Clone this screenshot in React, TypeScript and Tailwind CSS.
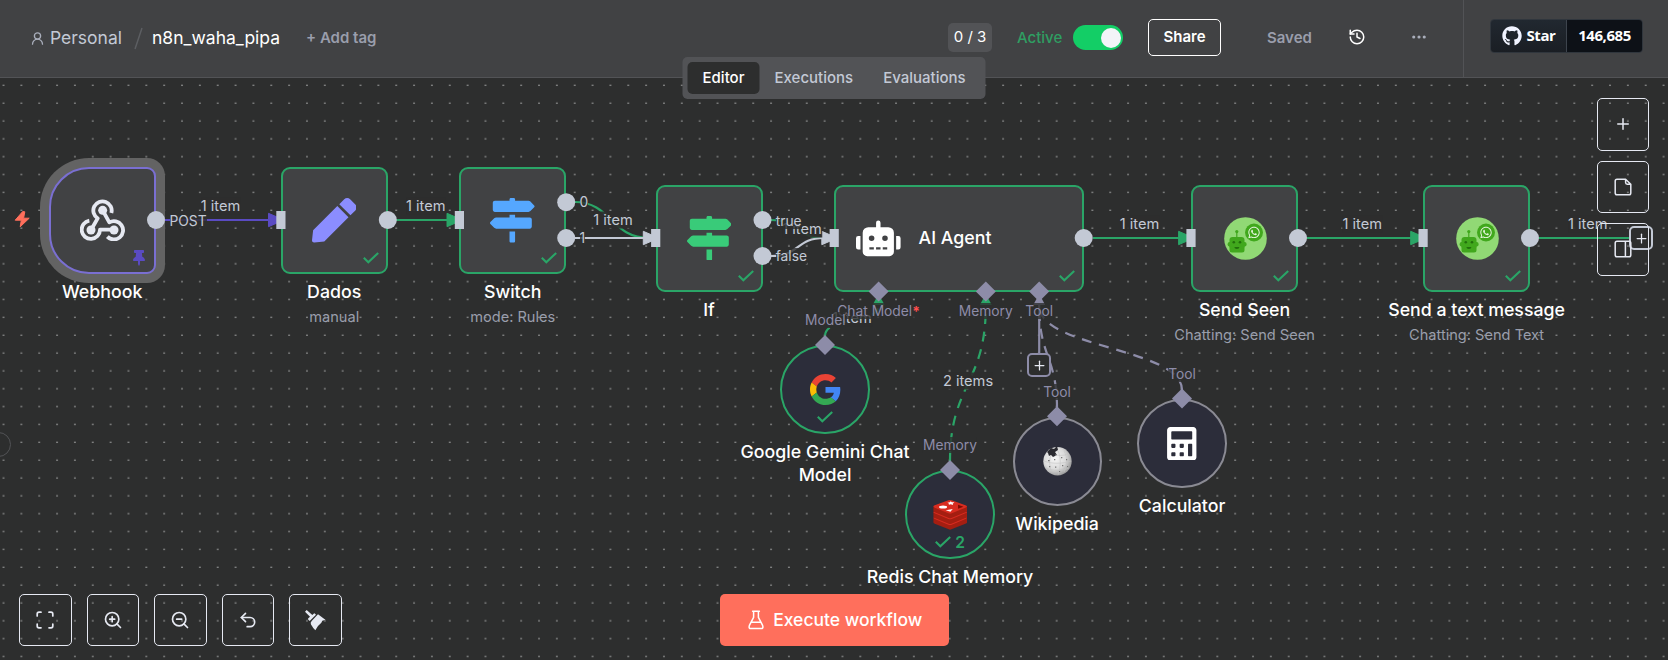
import type { ReactNode } from "react";
import { Ellipsis, History, Plus, Undo2, UserRound, ZoomIn, ZoomOut } from "lucide-react";
import { FaCalculator, FaGithub, FaMapSigns, FaPen, FaRobot, FaThumbtack, FaWhatsapp } from "react-icons/fa";

const UNIT = 17.85;
const ORIGIN_X = 48.6;
const ORIGIN_Y = 166.7;
const gx = (n: number) => ORIGIN_X + n * UNIT;
const gy = (n: number) => ORIGIN_Y + n * UNIT;

/* ---------- icons ---------- */

function CheckMark() {
  return (
    <svg width="16" height="12" viewBox="0 0 16 12" fill="none" stroke="#2aa567" strokeWidth="2.1">
      <path d="M0.8 5.8 5.3 10.2 15.2 0.9" />
    </svg>
  );
}

function WebhookIcon() {
  return (
    <svg width="45" height="42" viewBox="240 176 135 126" fill="none" stroke="#e6e9f2" strokeWidth="11.5" strokeLinejoin="round">
      <path d="M273 269 293 234A27.5 27.5 0 1 1 334 218" />
      <path d="M308 210 328 246A27.5 27.5 0 1 1 322 289" />
      <path d="M342 268 300 268A27.5 27.5 0 1 1 268 241" />
      <g fill="#e6e9f2" stroke="none">
        <circle cx="308" cy="210" r="13.5" />
        <circle cx="273" cy="269" r="13.5" />
        <circle cx="342" cy="269" r="13.5" />
      </g>
    </svg>
  );
}

function GoogleIcon() {
  return (
    <svg width="31" height="31" viewBox="0 0 48 48">
      <path fill="#EA4335" d="M24 9.5c3.54 0 6.71 1.22 9.21 3.6l6.85-6.85C35.9 2.38 30.47 0 24 0 14.62 0 6.51 5.38 2.56 13.22l7.98 6.19C12.43 13.72 17.74 9.5 24 9.5z" />
      <path fill="#4285F4" d="M46.98 24.55c0-1.57-.15-3.09-.38-4.55H24v9.02h12.94c-.58 2.96-2.26 5.48-4.78 7.18l7.73 6c4.51-4.18 7.09-10.36 7.09-17.65z" />
      <path fill="#FBBC05" d="M10.53 28.59c-.48-1.45-.76-2.99-.76-4.59s.27-3.14.76-4.59l-7.98-6.19C.92 16.46 0 20.12 0 24c0 3.88.92 7.54 2.56 10.78l7.97-6.19z" />
      <path fill="#34A853" d="M24 48c6.48 0 11.93-2.13 15.89-5.81l-7.73-6c-2.15 1.45-4.92 2.3-8.16 2.3-6.26 0-11.57-4.22-13.47-9.91l-7.98 6.19C6.51 42.62 14.62 48 24 48z" />
    </svg>
  );
}

function WahaIcon() {
  return (
    <svg width="43" height="43" viewBox="0 0 43 43" className="ml-px">
      <circle cx="21.5" cy="21.5" r="21.3" fill="#91d975" />
      <g fill="#41a81d">
        <circle cx="30" cy="15.5" r="9" />
        <circle cx="12.8" cy="14.6" r="1.6" />
        <rect x="12.2" y="15" width="1.2" height="6" />
        <rect x="5.5" y="27" width="15" height="8.5" rx="2.5" />
        <rect x="5.5" y="20" width="15" height="12" rx="3" />
        <rect x="3.6" y="25" width="19" height="4.5" rx="2" />
      </g>
      <g fill="#22700c">
        <circle cx="9.8" cy="25.2" r="1.3" />
        <circle cx="16" cy="25.2" r="1.3" />
        <path d="M10.4 30h5a2.5 2 0 0 1-5 0z" />
      </g>
      <FaWhatsapp x="23.5" y="9" size={13} color="#e9f7e2" />
    </svg>
  );
}

function RedisIcon() {
  return (
    <svg width="34.5" height="30" viewBox="0 0 103 90">
      {[34, 17, 0].map((y) => (
        <g key={y} transform={`translate(0 ${y})`}>
          <path d="M1 19v14c0 2 1 3 4 4l42 17q4 2 8 0l42-17c3-1 5-2 5-4V19z" fill="#a41e11" />
          <path d="M5 16 46 1q5-2 10 0l41 15c6 2 6 5 0 7L56 40q-5 2-10 0L5 23c-5-2-5-5 0-7z" fill="#d82c20" />
        </g>
      ))}
      <g fill="#fff">
        <ellipse cx="30" cy="21" rx="12" ry="4.6" />
        <path d="m43 8 7-1 3-3 3 3 8 0-5 4 1 4-7-2-6 1 1-3z" />
        <path d="m38 31 21-4-7 8z" />
      </g>
      <path d="m75 14 16 6-16 6z" fill="#7a0c00" />
    </svg>
  );
}

function WikipediaIcon() {
  return (
    <svg width="29" height="30" viewBox="0 0 29 30">
      <defs>
        <radialGradient id="globe" cx="0.4" cy="0.4" r="0.65">
          <stop offset="0" stopColor="#f6f6f6" />
          <stop offset="0.6" stopColor="#dadada" />
          <stop offset="1" stopColor="#969696" />
        </radialGradient>
      </defs>
      <circle cx="14.5" cy="15.2" r="14.2" fill="url(#globe)" />
      <path d="M4 6 8 2l3 1 3-3 1 4-3 2 2 3-4 2-2-2-2 1-1-3z" fill="#2a2a30" />
      <g fill="none" stroke="#c4c4c4" strokeWidth="0.6">
        <path d="M8 9c-2 5-2 11 1 17M15 5c3 6 3 15 0 24M21 5c4 7 3 15 0 21M1 15c8 3 18 3 27 0M3 22c7 3 16 3 23 0M12 9c6 1 11 0 14-1" />
      </g>
      <g fill="#777">
        <path d="M5 14h1.6v1.2H5zM11 13h1.3v1.3H11zM18 11h1.3v1.3H18zM23 13h1.2v1.3H23zM6 20h1.3v1.2H6zM12 20.5h1.3v1.3H12zM19 19h1.3v1.3H19zM24 20h1.1v1.1H24zM16 25h1.2v1.1H16z" />
      </g>
    </svg>
  );
}

function TidyIcon() {
  return (
    <svg width="22" height="22" viewBox="0 0 66 66" fill="#e6e9f2">
      <path d="m3 8 5-5 17 15 4-4q2-2 4 0l3 3-19 19-4-4q-2-2 0-4l5-5z" />
      <path d="m42 16 22 16-9 3-3 6q-11 8-18 23-6-5-10-13-4-5-4-10l3-5z" />
    </svg>
  );
}

function FitIcon() {
  return (
    <svg width="18" height="18" viewBox="0 0 18 18" fill="none" stroke="#e6e9f2" strokeWidth="1.7" strokeLinecap="round">
      <path d="M1.2 5V3Q1.2 1.2 3 1.2H5M13 1.2H15Q16.8 1.2 16.8 3V5M16.8 13V15Q16.8 16.8 15 16.8H13M5 16.8H3Q1.2 16.8 1.2 15V13" />
    </svg>
  );
}

function NoteIcon() {
  return (
    <svg width="18" height="18" viewBox="0 0 18 18" fill="none" stroke="#e6e9f2" strokeWidth="1.5" strokeLinejoin="round">
      <path d="M11.3 1.2H3Q1.2 1.2 1.2 3V15Q1.2 16.8 3 16.8H15Q16.8 16.8 16.8 15V6.2L11.6 1.2V4.6Q11.6 6.2 13.2 6.2H16.6" />
    </svg>
  );
}

function PanelIcon() {
  return (
    <svg width="18" height="18" viewBox="0 0 18 18" fill="none" stroke="#e6e9f2" strokeWidth="1.5">
      <rect x="1.2" y="1.2" width="15.6" height="15.6" rx="1.8" />
      <path d="M11.4 1.2V16.8" />
    </svg>
  );
}

function FlaskIcon() {
  return (
    <svg width="16" height="20" viewBox="0 0 16 20" fill="none" stroke="#fff" strokeWidth="1.5" strokeLinecap="round" strokeLinejoin="round">
      <path d="M4.6 1.2H11.4M5.6 1.2V7.3L1.4 15.4Q0.3 18.6 3 18.6H13Q15.7 18.6 14.6 15.4L10.4 7.3V1.2M3.4 12.2H12.6" />
    </svg>
  );
}

/* ---------- canvas data ---------- */

type CanvasNode = {
  x: number;
  y: number;
  w?: number;
  kind: "trigger" | "node" | "agent" | "sub";
  title: string;
  note?: string;
  icon: ReactNode;
  state?: "ok" | "idle" | "pinned";
  runs?: number;
};

const nodes: CanvasNode[] = [
  { x: 0, y: 0, kind: "trigger", title: "Webhook", icon: <WebhookIcon />, state: "pinned" },
  { x: 13, y: 0, kind: "node", title: "Dados", note: "manual", icon: <FaPen size={44.6} color="#8b8dff" />, state: "ok" },
  { x: 23, y: 0, kind: "node", title: "Switch", note: "mode: Rules", icon: <FaMapSigns size={44.6} color="#55a7ff" />, state: "ok" },
  { x: 34, y: 1, kind: "node", title: "If", icon: <FaMapSigns size={44.6} color="#39cb79" />, state: "ok" },
  { x: 44, y: 1, w: 14, kind: "agent", title: "AI Agent", icon: <FaRobot size={44.6} color="#ffffff" />, state: "ok" },
  { x: 64, y: 1, kind: "node", title: "Send Seen", note: "Chatting: Send Seen", icon: <WahaIcon />, state: "ok" },
  { x: 77, y: 1, kind: "node", title: "Send a text message", note: "Chatting: Send Text", icon: <WahaIcon />, state: "ok" },
  { x: 41, y: 10, kind: "sub", title: "Google Gemini Chat Model", icon: <GoogleIcon />, state: "ok" },
  { x: 48, y: 17, kind: "sub", title: "Redis Chat Memory", icon: <RedisIcon />, state: "ok", runs: 2 },
  { x: 54, y: 14, kind: "sub", title: "Wikipedia", icon: <WikipediaIcon />, state: "idle" },
  { x: 61, y: 13, kind: "sub", title: "Calculator", icon: <FaCalculator size={33.5} color="#ffffff" />, state: "idle" },
];

const shapes = {
  trigger: "rounded-l-[40px] rounded-r-[9px] border-[#7a6fd2] bg-[#414244] shadow-[0_0_0_9px_#636363]",
  node: "rounded-[9px] border-[#2aa567] bg-[#414244]",
  agent: "rounded-[9px] border-[#2aa567] bg-[#414244]",
  sub: "rounded-full border-[#2aa567] bg-[#2c2d3a]",
};

function NodeView({ node }: { node: CanvasNode }) {
  const size = (node.kind === "sub" ? 5 : 6) * UNIT;
  const width = node.w ? node.w * UNIT : size;
  return (
    <div className="absolute flex flex-col items-center" style={{ left: gx(node.x), top: gy(node.y), width }}>
      <div
        className={`relative flex w-full shrink-0 items-center border-2 ${shapes[node.kind]} ${
          node.kind === "agent" ? "gap-[18px] pl-[20px]" : "justify-center"
        } ${node.state === "idle" ? "border-[#8a8a93]!" : ""}`}
        style={{ height: size }}
      >
        {node.icon}
        {node.kind === "agent" && <span className="text-[17.8px] font-medium text-white">{node.title}</span>}
        {node.state === "pinned" && <FaThumbtack size={16} color="#5a4bc2" className="absolute right-[7px] bottom-[6px]" />}
        {node.state === "ok" && node.kind !== "sub" && (
          <div className="absolute right-[7px] bottom-[8px]">
            <CheckMark />
          </div>
        )}
        {node.state === "ok" && node.kind === "sub" && (
          <div className="absolute inset-x-0 bottom-[9px] flex h-[12px] items-center justify-center gap-[4px] text-[15.6px] font-semibold text-[#2aa567]">
            <CheckMark />
            {node.runs}
          </div>
        )}
      </div>
      {node.kind !== "agent" && (
        <div className="mt-[6px] flex w-[190px] flex-col items-center text-center">
          <span className="text-[17.75px] leading-[23px] font-medium text-white">{node.title}</span>
          {node.note && <span className="mt-[4px] text-[14.6px] leading-[20px] whitespace-nowrap text-[#9a9eac]">{node.note}</span>}
        </div>
      )}
    </div>
  );
}

const green = "#2aa567";
const pale = "#c3c9d5";
const violet = "#8d8ca8";

const edges = [
  { d: "M165 220H270", color: "#5a4bc2" },
  { d: "M396 220H449", color: green },
  { d: "M575 202C612 202 610 238 650 238", color: green },
  { d: "M575 238H645", color: pale },
  { d: "M771 220C800 220 796 238 824 238", color: green },
  { d: "M771 256C800 256 796 238 824 238", color: pale },
  { d: "M1093 238H1180", color: green },
  { d: "M1307 238H1412", color: green },
  { d: "M1539 238H1630", color: green },
  { d: "M825 336C825 316 878.8 325 878.8 305", color: green, dash: "10 7.85" },
  { d: "M950 461C950 384 985.8 384 985.8 306", color: green, dash: "10 7.85" },
  { d: "M1057 408C1057 357 1039.2 357 1039.2 306", color: violet, dash: "10 7.85" },
  { d: "M1182 390C1182 348 1039.2 348 1039.2 306", color: violet, dash: "10 7.85" },
  { d: "M1039.2 305V354", color: violet },
];

const arrowsRight = [
  { x: 281, y: 220, color: "#5a4bc2" },
  { x: 459.5, y: 220, color: green },
  { x: 655.8, y: 238, color: pale },
  { x: 834.3, y: 238, color: pale },
  { x: 1191.1, y: 238, color: green },
  { x: 1423.2, y: 238, color: green },
];

const arrowsUp = [
  { x: 878.6, color: green },
  { x: 985.8, color: green },
  { x: 1039.2, color: violet },
];

const outputs = [
  [156, 220], [387.8, 220], [566.2, 202.2], [566.2, 238], [762.5, 220], [762.5, 256], [1083.7, 238], [1298, 238], [1530, 238],
];

const diamonds = [
  [878.6, 291.4], [985.8, 291.4], [1039.2, 291.4], [825, 345], [950, 470], [1057, 416.3], [1182, 398.4],
];

type CanvasLabel = { x: number; y: number; text: string };

const edgeLabels: CanvasLabel[] = [
  { x: 220.5, y: 205.5, text: "1 item" },
  { x: 425.7, y: 205.5, text: "1 item" },
  { x: 613, y: 219.5, text: "1 item" },
  { x: 802, y: 228.5, text: "1 item" },
  { x: 1139.5, y: 223.5, text: "1 item" },
  { x: 1362.3, y: 223.5, text: "1 item" },
  { x: 1587.8, y: 223.5, text: "1 item" },
  { x: 852, y: 317.5, text: "1 item" },
  { x: 968, y: 380.5, text: "2 items" },
];

const outputLabels: CanvasLabel[] = [
  { x: 169.5, y: 220.5, text: "POST" },
  { x: 579.5, y: 202, text: "0" },
  { x: 579.5, y: 238, text: "1" },
  { x: 775.7, y: 220.5, text: "true" },
  { x: 775.7, y: 256, text: "false" },
];

const portLabels: (CanvasLabel & { required?: boolean })[] = [
  { x: 878.6, y: 311.4, text: "Chat Model", required: true },
  { x: 985.7, y: 311.4, text: "Memory" },
  { x: 1039.2, y: 311.4, text: "Tool" },
  { x: 825.3, y: 320.3, text: "Model" },
  { x: 950, y: 445.3, text: "Memory" },
  { x: 1057, y: 392, text: "Tool" },
  { x: 1182, y: 374.3, text: "Tool" },
];

function Canvas() {
  return (
    <div className="absolute inset-0 overflow-hidden bg-[#2d2e2e]">
      <svg className="absolute inset-0" width="1668" height="660">
        <defs>
          <pattern id="dots" x="-5.4" y="-5.2" width="17.85" height="17.85" patternUnits="userSpaceOnUse">
            <circle cx="8.925" cy="1.35" r="0.74" fill="#bcbebe" />
          </pattern>
        </defs>
        <rect width="1668" height="660" fill="url(#dots)" />
        <g fill="none" strokeWidth="2.2">
          {edges.map((e) => (
            <path key={e.d} d={e.d} stroke={e.color} strokeDasharray={e.dash} />
          ))}
        </g>
        {arrowsRight.map((a) => (
          <path key={a.x} d={`M${a.x - 12.5} ${a.y - 6.7}L${a.x + 3} ${a.y}L${a.x - 12.5} ${a.y + 6.7}Z`} fill={a.color} stroke={a.color} strokeLinejoin="round" />
        ))}
        {arrowsUp.map((a) => (
          <path key={a.x} d={`M${a.x - 6} 305L${a.x} 294L${a.x + 6} 305Z`} fill={a.color} />
        ))}
      </svg>

      {edgeLabels.map((l) => (
        <span
          key={l.x}
          className="absolute -translate-1/2 bg-[#2d2e2e]/90 text-[14.6px] leading-[17px] whitespace-nowrap text-[#c3c9d5]"
          style={{ left: l.x, top: l.y }}
        >
          {l.text}
        </span>
      ))}

      {nodes.map((n) => (
        <NodeView key={n.title} node={n} />
      ))}

      {outputLabels.map((l) => (
        <span
          key={l.text}
          className="absolute -translate-y-1/2 bg-[#2d2e2e]/80 text-[13.8px] leading-[16px] whitespace-nowrap text-[#c3c9d5]"
          style={{ left: l.x, top: l.y }}
        >
          {l.text}
        </span>
      ))}
      {portLabels.map((l) => (
        <span
          key={`${l.x}-${l.y}`}
          className="absolute -translate-1/2 bg-[#2d2e2e]/80 text-[13.8px] leading-[16px] whitespace-nowrap text-[#8d8ca8]"
          style={{ left: l.x, top: l.y }}
        >
          {l.text}
          {l.required && <span className="font-bold text-[#ff4d4d]">*</span>}
        </span>
      ))}

      <svg className="absolute inset-0" width="1668" height="660">
        {arrowsRight.map((a) => (
          <rect key={a.x} x={a.x - 4.7} y={a.y - 9} width="9.2" height="18" fill={pale} />
        ))}
        {outputs.map(([x, y]) => (
          <circle key={`${x}-${y}`} cx={x} cy={y} r="9" fill={pale} />
        ))}
        {diamonds.map(([x, y]) => (
          <path key={`${x}-${y}`} d={`M${x} ${y - 10}L${x + 10} ${y}L${x} ${y + 10}L${x - 10} ${y}Z`} fill={violet} />
        ))}
        <path d="M22.7 211.5 15.2 220.2H21.3L20.2 226.8 29.2 218.2H23.6L24.8 211.8Z" fill="#ff6f5c" stroke="#ff6f5c" strokeLinejoin="round" />
      </svg>

      <div className="absolute top-[353px] left-[1027px] flex size-[24px] items-center justify-center rounded-[5px] border-2 border-[#8d8ca8] bg-[#2d2e2e] text-[#e6e9f2]">
        <Plus size={15} strokeWidth={2} />
      </div>
      <div className="absolute top-[226px] left-[1629px] flex size-[24px] items-center justify-center rounded-[5px] border-2 border-[#c3c9d5] bg-[#2d2e2e] text-[#e6e9f2]">
        <Plus size={15} strokeWidth={2} />
      </div>
    </div>
  );
}

function Header() {
  return (
    <header className="relative flex h-[78px] items-center border-b border-[#525356] bg-[#414244] pl-[30px] whitespace-nowrap">
      <UserRound size={15} strokeWidth={2.1} color="#a9aebb" />
      <span className="ml-[5px] text-[17.5px] text-[#c3c9d5]">Personal</span>
      <svg className="ml-[12px]" width="9" height="23" viewBox="0 0 9 23" stroke="#5c5e62" strokeWidth="1.5">
        <path d="M1 22 8 1" />
      </svg>
      <span className="ml-[9px] text-[17.5px] text-white">n8n_waha_pipa</span>
      <span className="ml-[26px] text-[15px] font-semibold text-[#9a9eac]">+ Add tag</span>

      <div className="ml-auto flex h-[29px] w-[44px] -translate-y-px items-center justify-center rounded-[5px] bg-[#525356] text-[15px] text-white">0 / 3</div>
      <span className="ml-[25px] w-[46px] text-[15px] font-medium text-[#2f9e62]">Active</span>
      <div className="ml-[10px] flex h-[25px] w-[50px] -translate-y-px items-center justify-end rounded-full bg-[#13ce66] pr-[2px]">
        <div className="size-[20px] rounded-full bg-[#f2f4f8]" />
      </div>
      <button className="ml-[25px] h-[37px] w-[73px] -translate-y-px rounded-[5px] border border-white text-[15px] font-semibold text-white">Share</button>
      <span className="ml-[46px] w-[45px] text-[15px] font-semibold text-[#9a9eac]">Saved</span>
      <History size={18} strokeWidth={2} color="#ffffff" className="ml-[36px] -translate-y-[2px]" />
      <Ellipsis size={18} strokeWidth={2.2} color="#a9aebb" className="ml-[44px] -translate-y-[2px]" />
      <div className="ml-[35px] h-[77px] w-px bg-[#525356]" />
      <div className="mr-[25px] ml-[26px] flex h-[34px] w-[153px] -translate-y-[3px] overflow-hidden rounded-[4px] border border-[#30363d] font-['Open_Sans',sans-serif] text-[15px] font-bold tracking-[-0.45px] text-white">
        <div className="flex w-[75px] items-center justify-center gap-[5px] bg-linear-to-b from-[#212830] to-[#1a1e24]">
          <FaGithub size={20} color="#f0f3ff" />
          Star
        </div>
        <div className="flex flex-1 items-center justify-center border-l border-[#3d444d] bg-[#0d1117]">146,685</div>
      </div>

      <nav className="absolute top-[57px] left-1/2 flex h-[42px] w-[303px] -translate-x-1/2 items-center rounded-[5px] bg-[#525356] px-[5px] text-[15px] font-medium text-[#c3c9d5]">
        <span className="flex h-[32px] w-[72px] items-center justify-center rounded-[5px] bg-[#2d2e2e] text-white">Editor</span>
        <span className="ml-[15px]">Executions</span>
        <span className="ml-[30px]">Evaluations</span>
      </nav>
    </header>
  );
}

const zoomTools: { name: string; icon: ReactNode }[] = [
  { name: "fit", icon: <FitIcon /> },
  { name: "in", icon: <ZoomIn size={20} /> },
  { name: "out", icon: <ZoomOut size={20} /> },
  { name: "undo", icon: <Undo2 size={20} /> },
  { name: "tidy", icon: <TidyIcon /> },
];

const sideTools: { name: string; icon: ReactNode }[] = [
  { name: "add", icon: <Plus size={18} /> },
  { name: "note", icon: <NoteIcon /> },
  { name: "panel", icon: <PanelIcon /> },
];

export default function App() {
  return (
    <div className="relative flex h-[660px] w-[1668px] flex-col overflow-hidden bg-[#2d2e2e] font-[Inter,sans-serif]">
      <Canvas />
      <Header />
      <main className="relative flex flex-1 flex-col justify-between pt-[20px] pb-[14px]">
        <div className="flex flex-col gap-[10px] self-end pr-[19px]">
          {sideTools.map((t) => (
            <button key={t.name} className="flex size-[52.5px] items-center justify-center rounded-[5px] border border-[#e6e9f2] text-[#e6e9f2]">
              {t.icon}
            </button>
          ))}
        </div>
        <div className="flex pl-[19.2px]">
          <div className="flex gap-[15px]">
            {zoomTools.map((t) => (
              <button key={t.name} className="flex size-[52.5px] items-center justify-center rounded-[5px] border border-[#e6e9f2] text-[#e6e9f2]">
                {t.icon}
              </button>
            ))}
          </div>
          <button className="ml-[378px] flex h-[52px] w-[229px] items-center justify-center gap-[9px] rounded-[5px] bg-[#ff6f5c] pt-px pl-[2px] text-[17.5px] font-medium text-white">
            <FlaskIcon />
            Execute workflow
          </button>
        </div>
      </main>
      <div className="absolute top-[432px] -left-[14px] size-[25px] rounded-full border border-[#525356] bg-[#2d2e2e]" />
    </div>
  );
}
